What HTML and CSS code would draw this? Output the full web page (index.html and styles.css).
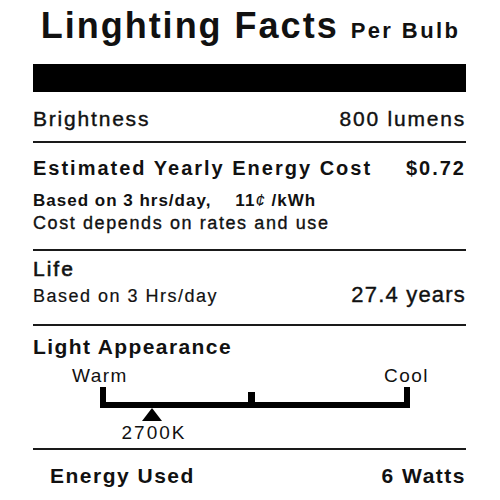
FILE: index.html
```html
<!DOCTYPE html>
<html>
<head>
    <title>Linghting Facts</title>
    <link rel="stylesheet" href="styles.css">
</head>
<body>

    <div class="label">

        <header class="label-head">
            <h1 class="title">Linghting Facts</h1>
            <span class="per">Per Bulb</span>
        </header>

        <div class="bar"></div>

        <!-- Brightness -->
        <section class="fact fact-brightness">
            <div class="row">
                <span class="medium">Brightness</span>
                <span class="medium">800 lumens</span>
            </div>
        </section>

        <!-- Cost -->
        <section class="fact fact-cost">
            <div class="row cost-head">
                <span>Estimated Yearly Energy Cost</span>
                <span>$0.72</span>
            </div>
            <p class="note note-bold">Based on 3 hrs/day,<span class="rate">11<span class="cent">&cent;</span> /kWh</span></p>
            <p class="note note-plain">Cost depends on rates and use</p>
        </section>

        <!-- Life -->
        <section class="fact fact-life">
            <h2 class="fact-title life-title">Life</h2>
            <div class="row life-row">
                <span class="life-basis">Based on 3 Hrs/day</span>
                <span class="life-years">27.4 years</span>
            </div>
        </section>

        <!-- Light appearance -->
        <section class="fact fact-light">
            <h2 class="fact-title light-title">Light Appearance</h2>
            <div class="scale-labels">
                <span>Warm</span>
                <span>Cool</span>
            </div>
            <div class="scale"></div>
            <div class="marker">
                <div class="marker-arrow"></div>
                <span class="marker-text">2700K</span>
            </div>
        </section>

        <!-- Energy -->
        <section class="fact fact-energy">
            <div class="row energy-row">
                <span>Energy Used</span>
                <span>6 Watts</span>
            </div>
        </section>

    </div>

</body>
</html>
```

FILE: styles.css
```css
/* Base */
body {
    margin: 0;
    background: #fff;
    color: #111;
    font-family: 'Liberation Sans', Arial, sans-serif;
}

.label {
    width: 433px;
    padding: 0 34px 0 33px;
}

/* Header */
.label-head {
    display: flex;
    justify-content: center;
    align-items: baseline;
    gap: 12px;
    height: 64px;
    margin-left: 2px;
}

.title {
    margin: 0;
    font-size: 36px;
    line-height: 51px;
    font-weight: 700;
    letter-spacing: 2px;
}

.per {
    font-size: 22px;
    line-height: 24px;
    font-weight: 700;
    letter-spacing: 2.4px;
}

.bar {
    height: 28px;
    background: #000;
}

/* Fact blocks */
.fact {
    border-bottom: 2px solid #1a1a1a;
}

.fact-energy {
    border-bottom: none;
}

.row {
    display: flex;
    justify-content: space-between;
    align-items: baseline;
}

.medium {
    -webkit-text-stroke: 0.4px #111;
}

.fact-brightness {
    padding: 15px 0 10px;
}

.fact-brightness .row {
    font-size: 21px;
    line-height: 24px;
    letter-spacing: 1.8px;
}

/* Cost */
.fact-cost {
    padding: 13px 0 14px;
}

.cost-head {
    font-size: 20px;
    line-height: 24px;
    font-weight: 700;
    letter-spacing: 2px;
    margin-bottom: 10px;
}

.note {
    margin: 0;
}

.note-bold {
    font-size: 17px;
    line-height: 22px;
    font-weight: 700;
    letter-spacing: 1px;
}

.rate {
    margin-left: 24px;
}

.cent {
    font-weight: 400;
    font-style: italic;
}

.note-plain {
    font-size: 18px;
    line-height: 23px;
    letter-spacing: 1.6px;
    -webkit-text-stroke: 0.35px #111;
}

/* Life */
.fact-life {
    padding: 6px 0 15px;
}

.fact-title {
    margin: 0;
    font-size: 21px;
    line-height: 24px;
}

.life-title {
    font-weight: 400;
    letter-spacing: 2px;
    -webkit-text-stroke: 0.6px #111;
}

.life-row {
    margin-top: 1px;
    line-height: 26px;
}

.life-basis {
    font-size: 18px;
    letter-spacing: 1.5px;
    -webkit-text-stroke: 0.2px #111;
}

.life-years {
    font-size: 22px;
    letter-spacing: 1.2px;
    -webkit-text-stroke: 0.4px #111;
}

/* Light appearance */
.fact-light {
    padding: 9px 0 3px;
}

.light-title {
    font-weight: 700;
    letter-spacing: 1.4px;
}

.scale-labels {
    display: flex;
    justify-content: space-between;
    margin-top: 6px;
    padding: 0 37px 0 39px;
    font-size: 19px;
    line-height: 22px;
    letter-spacing: 1.5px;
}

.scale {
    position: relative;
    width: 298px;
    height: 15px;
    margin-left: 67px;
    border: 6px solid #000;
    border-top: none;
}

.scale::after {
    content: "";
    position: absolute;
    left: 142px;
    top: 5px;
    width: 7px;
    height: 10px;
    background: #000;
}

.marker {
    display: flex;
    flex-direction: column;
    align-items: center;
    width: 70px;
    margin-left: 86px;
}

.marker-arrow {
    width: 0;
    height: 0;
    border-left: 10px solid transparent;
    border-right: 10px solid transparent;
    border-bottom: 13px solid #000;
    margin-left: -4px;
}

.marker-text {
    font-size: 19px;
    line-height: 24px;
    letter-spacing: 2px;
}

/* Energy */
.fact-energy {
    padding: 14px 0 0 17px;
}

.energy-row {
    font-size: 21px;
    line-height: 24px;
    font-weight: 700;
    letter-spacing: 1.5px;
}
```
